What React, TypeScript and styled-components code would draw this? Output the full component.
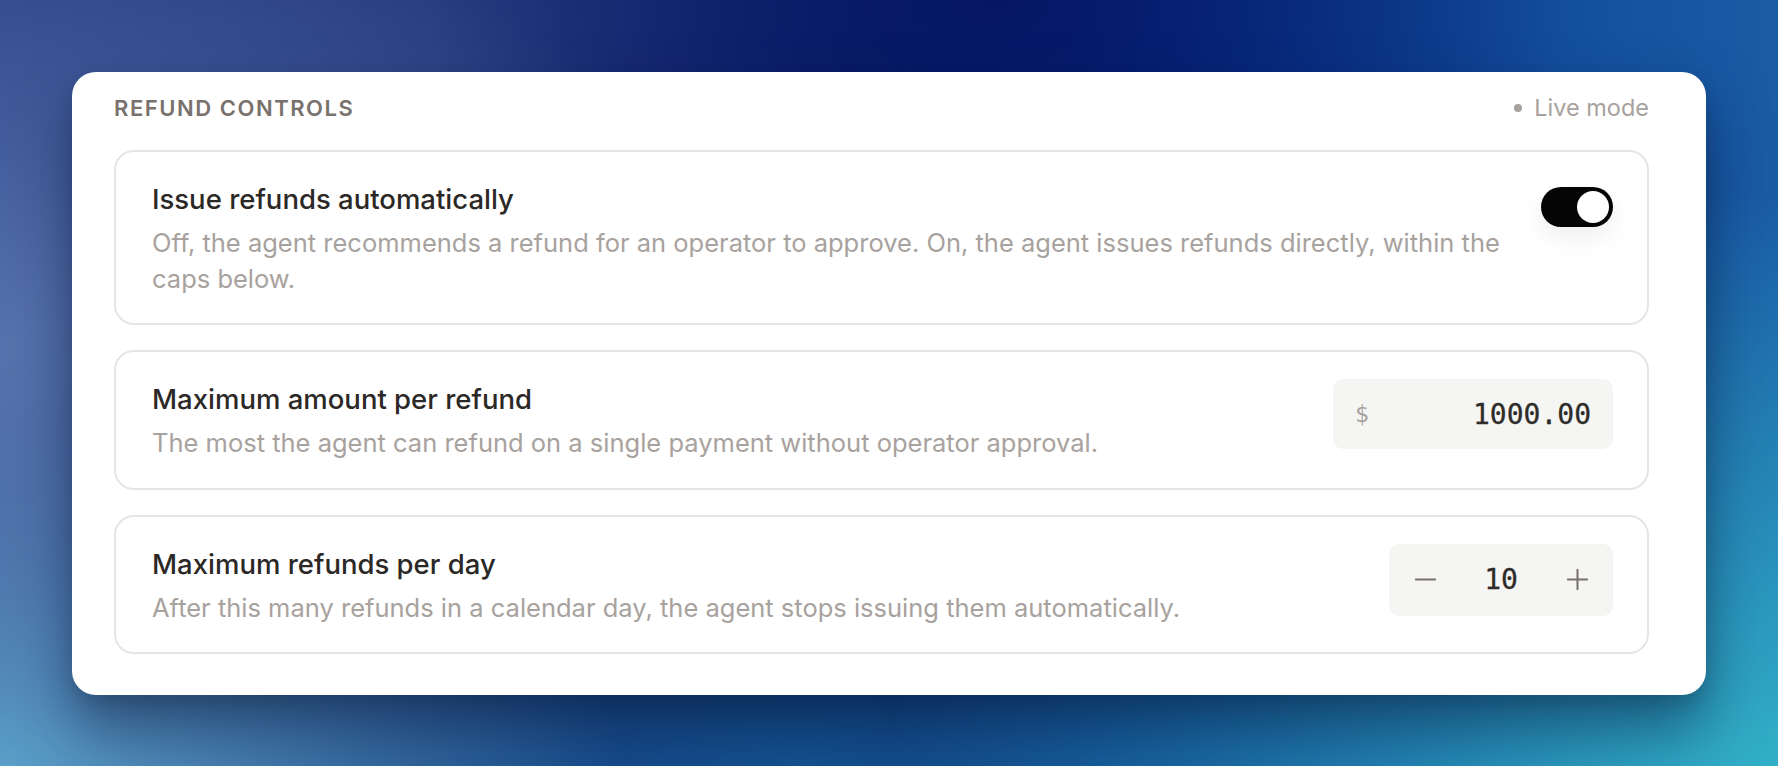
import React, { useState } from 'react';
import styled, { createGlobalStyle } from 'styled-components';
import { Minus, Plus } from 'lucide-react';

const GlobalStyle = createGlobalStyle`
  html, body {
    margin: 0;
    padding: 0;
  }
  body {
    font-family: Inter, "Noto Sans", "Liberation Sans", sans-serif;
    -webkit-font-smoothing: antialiased;
  }
  * {
    box-sizing: border-box;
  }
`;

const MONO = '"DejaVu Sans Mono", "Liberation Mono", monospace';

/**
 * Refund controls panel: an auto-refund switch plus the two caps that
 * limit what the agent may refund without an operator.
 */
const App: React.FC = () => {
  const [autoRefund, setAutoRefund] = useState(true);
  const [perDay, setPerDay] = useState(10);
  const amount = 1000;

  return (
    <>
      <GlobalStyle />
      <Page>
        <Panel>
          <PanelHeader>
            <SectionLabel>Refund controls</SectionLabel>
            <ModeBadge>
              <ModeDot />
              Live mode
            </ModeBadge>
          </PanelHeader>

          <SettingList>
            <SettingRow>
              <SettingText>
                <SettingTitle>Issue refunds automatically</SettingTitle>
                <SettingHint>
                  Off, the agent recommends a refund for an operator to approve. On, the agent issues
                  refunds directly, within the caps below.
                </SettingHint>
              </SettingText>
              <Toggle
                type="button"
                role="switch"
                aria-checked={autoRefund}
                $on={autoRefund}
                onClick={() => setAutoRefund(v => !v)}
              >
                <Knob />
              </Toggle>
            </SettingRow>

            <SettingRow>
              <SettingText>
                <SettingTitle>Maximum amount per refund</SettingTitle>
                <SettingHint>
                  The most the agent can refund on a single payment without operator approval.
                </SettingHint>
              </SettingText>
              <AmountField>
                <Currency>$</Currency>
                <AmountValue>{amount.toFixed(2)}</AmountValue>
              </AmountField>
            </SettingRow>

            <SettingRow>
              <SettingText>
                <SettingTitle>Maximum refunds per day</SettingTitle>
                <SettingHint>
                  After this many refunds in a calendar day, the agent stops issuing them automatically.
                </SettingHint>
              </SettingText>
              <Stepper>
                <StepButton type="button" aria-label="Decrease" onClick={() => setPerDay(n => Math.max(0, n - 1))}>
                  <Minus size={33} strokeWidth={1.5} />
                </StepButton>
                <StepValue>{perDay}</StepValue>
                <StepButton type="button" aria-label="Increase" onClick={() => setPerDay(n => n + 1)}>
                  <Plus size={33} strokeWidth={1.5} />
                </StepButton>
              </Stepper>
            </SettingRow>
          </SettingList>
        </Panel>
      </Page>
    </>
  );
};

// Full-window backdrop with the blue mesh gradient
const Page = styled.div`
  min-height: 100vh;
  padding: 72px;
  background:
    radial-gradient(32% 50% at 56% 0%, rgba(6, 22, 100, 1) 0%, rgba(6, 22, 100, 0) 100%),
    radial-gradient(42% 60% at 0% 45%, rgba(94, 124, 182, 0.85) 0%, rgba(94, 124, 182, 0) 100%),
    radial-gradient(35% 55% at 0% 100%, rgba(92, 168, 206, 0.95) 0%, rgba(92, 168, 206, 0) 100%),
    radial-gradient(50% 75% at 100% 100%, rgba(50, 176, 200, 1) 0%, rgba(50, 176, 200, 0) 100%),
    radial-gradient(40% 50% at 45% 100%, rgba(20, 84, 146, 1) 0%, rgba(20, 84, 146, 0) 100%),
    linear-gradient(90deg, #2b4285 0%, #25397c 30%, #0e2270 50%, #05308a 62%, #1a5ca6 100%);
`;

// White rounded card holding the controls
const Panel = styled.section`
  background: #ffffff;
  border-radius: 24px;
  padding: 22px 57px 41px 42px;
  box-shadow: 0 34px 60px rgba(6, 22, 56, 0.5), 0 8px 18px rgba(0, 0, 0, 0.12);
`;

const PanelHeader = styled.header`
  display: flex;
  justify-content: space-between;
  align-items: center;
  height: 28px;
  margin-bottom: 28px;
`;

const SectionLabel = styled.h2`
  margin: 0;
  font-size: 22px;
  line-height: 28px;
  font-weight: 600;
  letter-spacing: 0.07em;
  text-transform: uppercase;
  color: #78716c;
`;

const ModeBadge = styled.div`
  display: flex;
  align-items: center;
  gap: 12px;
  font-size: 23.5px;
  line-height: 28px;
  color: #a8a29e;
`;

const ModeDot = styled.span`
  width: 8px;
  height: 8px;
  border-radius: 50%;
  background: #a8a29e;
`;

const SettingList = styled.div`
  display: flex;
  flex-direction: column;
  gap: 25px;
`;

// One bordered setting: text on the left, its control on the right
const SettingRow = styled.div`
  display: flex;
  align-items: flex-start;
  justify-content: space-between;
  gap: 40px;
  padding: 29px 34px 27px 36px;
  border: 2px solid #e7e5e4;
  border-radius: 20px;
`;

const SettingText = styled.div`
  flex: 1;
  min-width: 0;
`;

const SettingTitle = styled.h3`
  margin: 0 0 8px;
  font-size: 27.5px;
  line-height: 36px;
  font-weight: 500;
  color: #2b2826;
`;

const SettingHint = styled.p`
  margin: 0;
  font-size: 25.5px;
  line-height: 35.5px;
  color: #a8a29e;
`;

const Toggle = styled.button<{ $on: boolean }>`
  flex: none;
  display: flex;
  justify-content: ${p => (p.$on ? 'flex-end' : 'flex-start')};
  width: 72px;
  height: 40px;
  margin-top: 6px;
  padding: 4px;
  border: none;
  border-radius: 20px;
  background: ${p => (p.$on ? '#050505' : '#d6d3d1')};
  box-shadow: 0 10px 24px rgba(0, 0, 0, 0.07);
  cursor: pointer;
`;

const Knob = styled.span`
  width: 32px;
  height: 32px;
  border-radius: 50%;
  background: #ffffff;
`;

const AmountField = styled.div`
  flex: none;
  display: flex;
  align-items: center;
  justify-content: space-between;
  width: 280px;
  height: 70px;
  margin-top: -2px;
  padding: 0 22px;
  border-radius: 10px;
  background: #f5f5f4;
`;

const Currency = styled.span`
  font-family: ${MONO};
  font-size: 23px;
  color: #a8a29e;
`;

const AmountValue = styled.span`
  font-family: ${MONO};
  font-size: 28px;
  color: #2e2b29;
  -webkit-text-stroke: 0.3px #2e2b29;
`;

const Stepper = styled.div`
  flex: none;
  display: flex;
  align-items: center;
  width: 224px;
  height: 72px;
  margin-top: -2px;
  padding: 0 12px;
  border-radius: 10px;
  background: #f5f5f4;
`;

const StepButton = styled.button`
  display: flex;
  align-items: center;
  justify-content: center;
  width: 48px;
  height: 48px;
  padding: 0;
  border: none;
  background: transparent;
  color: #78716c;
  cursor: pointer;
`;

const StepValue = styled.span`
  flex: 1;
  text-align: center;
  font-family: ${MONO};
  font-size: 28px;
  color: #2e2b29;
  -webkit-text-stroke: 0.3px #2e2b29;
`;

export default App;
